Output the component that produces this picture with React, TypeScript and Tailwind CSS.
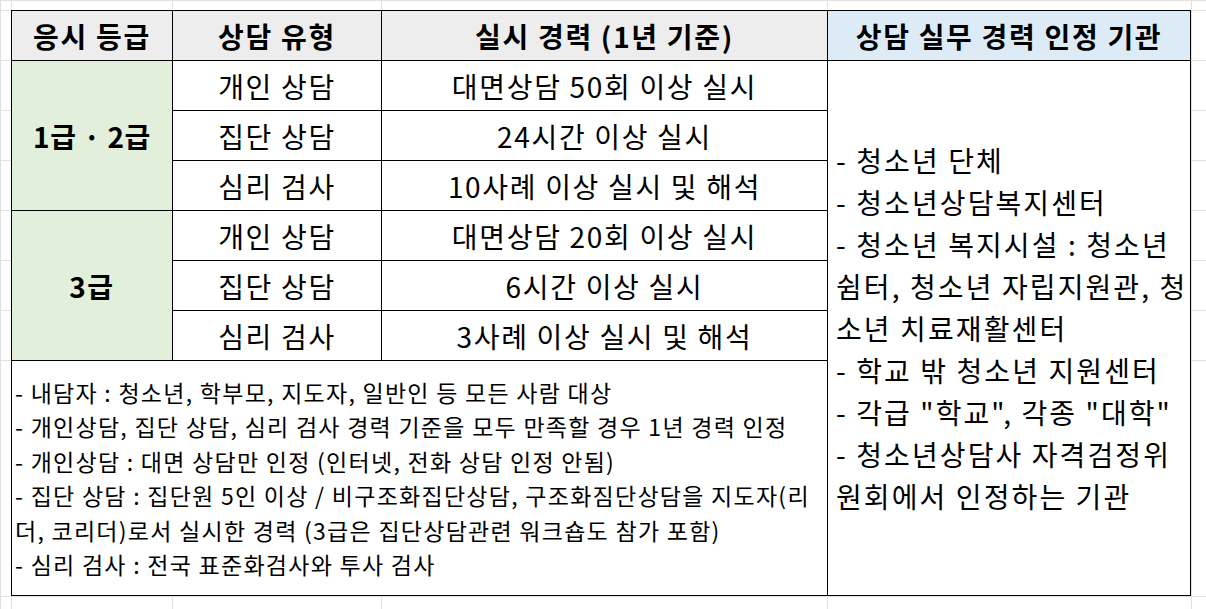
const colStart = ['col-start-1', 'col-start-2', 'col-start-3', 'col-start-4', 'col-start-5', 'col-start-6']
const rowStart = ['row-start-1', 'row-start-2', 'row-start-3', 'row-start-4', 'row-start-5', 'row-start-6', 'row-start-7', 'row-start-8', 'row-start-9', 'row-start-10']

const bodyRows = [
  { type: '개인 상담', text: '대면상담 50회 이상 실시' },
  { type: '집단 상담', text: '24시간 이상 실시' },
  { type: '심리 검사', text: '10사례 이상 실시 및 해석' },
  { type: '개인 상담', text: '대면상담 20회 이상 실시' },
  { type: '집단 상담', text: '6시간 이상 실시' },
  { type: '심리 검사', text: '3사례 이상 실시 및 해석' },
]

const typeRow = ['row-start-2', 'row-start-3', 'row-start-4', 'row-start-5', 'row-start-6', 'row-start-7']

const notes = [
  '- 내담자 : 청소년, 학부모, 지도자, 일반인 등 모든 사람 대상',
  '- 개인상담, 집단 상담, 심리 검사 경력 기준을 모두 만족할 경우 1년 경력 인정',
  '- 개인상담 : 대면 상담만 인정 (인터넷, 전화 상담 인정 안됨)',
  '- 집단 상담 : 집단원 5인 이상 / 비구조화집단상담, 구조화짐단상담을 지도자(리',
  '더, 코리더)로서 실시한 경력 (3급은 집단상담관련 워크숍도 참가 포함)',
  '- 심리 검사 : 전국 표준화검사와 투사 검사',
]

const orgs = [
  '- 청소년 단체',
  '- 청소년상담복지센터',
  '- 청소년 복지시설 : 청소년',
  '쉼터, 청소년 자립지원관, 청',
  '소년 치료재활센터',
  '- 학교 밖 청소년 지원센터',
  '- 각급 "학교", 각종 "대학"',
  '- 청소년상담사 자격검정위',
  '원회에서 인정하는 기관',
]

export default function App() {
  const cell = 'border-l border-t border-black flex items-center justify-center text-[28px] whitespace-nowrap'
  return (
    <div className="w-[1206px] h-[609px] overflow-hidden bg-white text-black font-['Noto_Sans_CJK_KR','Noto_Sans',sans-serif] grid grid-cols-[11px_161px_209px_446px_364px_1fr] grid-rows-[10px_50px_50px_50px_50px_50px_50px_50px_236px_1fr]">
      {/* sheet gridlines */}
      {rowStart.map((r) =>
        colStart.map((c) => (
          <div key={r + c} className={`${r} ${c} border-l border-t border-[#e1e1e1]`} />
        ))
      )}

      {/* table */}
      <div className="col-start-2 col-span-4 row-start-2 row-span-8 grid grid-cols-[161px_209px_446px_364px] grid-rows-[50px_50px_50px_50px_50px_50px_50px_236px]">
        <div className={`${cell} tracking-[0.06em] col-start-1 row-start-1 bg-[#ededed] font-bold`}>응시 등급</div>
        <div className={`${cell} tracking-[0.06em] col-start-2 row-start-1 bg-[#ededed] font-bold`}>상담 유형</div>
        <div className={`${cell} tracking-[0.06em] col-start-3 row-start-1 bg-[#ededed] font-bold`}>실시 경력 (1년 기준)</div>
        <div className={`${cell} tracking-[0.06em] col-start-4 row-start-1 border-r bg-[#ddebf7] font-bold`}>상담 실무 경력 인정 기관</div>

        <div className={`${cell} tracking-[0.02em] col-start-1 row-start-2 row-span-3 bg-[#e2efda] font-bold`}>1급 · 2급</div>
        <div className={`${cell} tracking-[0.06em] col-start-1 row-start-5 row-span-3 bg-[#e2efda] font-bold`}>3급</div>

        {bodyRows.map((row, i) => (
          <div key={'t' + i} className={`${cell} tracking-[0.06em] col-start-2 ${typeRow[i]} bg-white`}>{row.type}</div>
        ))}
        {bodyRows.map((row, i) => (
          <div key={'x' + i} className={`${cell} tracking-[0.06em] col-start-3 ${typeRow[i]} bg-white`}>{row.text}</div>
        ))}

        <div className="col-start-4 row-start-2 row-span-7 border-l border-t border-r border-b border-black bg-white flex flex-col justify-center pl-[8px] text-[28px] tracking-[0.075em] leading-[42px] whitespace-nowrap">
          {orgs.map((line, i) => (
            <div key={i}>{line}</div>
          ))}
        </div>

        <div className="col-start-1 col-span-3 row-start-8 border-l border-t border-b border-black bg-white flex flex-col justify-center pl-[3px] text-[23px] tracking-[0.055em] leading-[34.5px] whitespace-nowrap">
          {notes.map((line, i) => (
            <div key={i}>{line}</div>
          ))}
        </div>
      </div>
    </div>
  )
}
